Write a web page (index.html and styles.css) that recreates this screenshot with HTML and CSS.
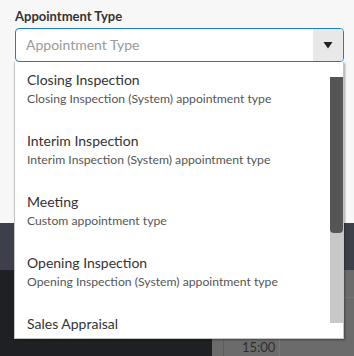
FILE: index.html
```html
<!DOCTYPE html>
<html lang="en">
<head>
  <meta charset="UTF-8">
  <meta name="viewport" content="width=device-width, initial-scale=1.0">
  <title>Appointment Type</title>
  <link rel="stylesheet" href="styles.css">
</head>
<body>

  <div class="app">
    <div class="panel">
      <div class="field">
        <label class="field-label">Appointment Type</label>
        <div class="select">
          <span class="placeholder">Appointment Type</span>
          <span class="arrow">
            <svg width="10" height="7" viewBox="0 0 10 7"><polygon points="0.5,0 9.5,0 5,6.5" fill="#222"/></svg>
          </span>
        </div>

        <div class="menu">
          <ul class="options">
            <li>
              <div class="opt-title">Closing Inspection</div>
              <div class="opt-sub">Closing Inspection (System) appointment type</div>
            </li>
            <li>
              <div class="opt-title">Interim Inspection</div>
              <div class="opt-sub">Interim Inspection (System) appointment type</div>
            </li>
            <li>
              <div class="opt-title">Meeting</div>
              <div class="opt-sub">Custom appointment type</div>
            </li>
            <li>
              <div class="opt-title">Opening Inspection</div>
              <div class="opt-sub">Opening Inspection (System) appointment type</div>
            </li>
            <li>
              <div class="opt-title">Sales Appraisal</div>
            </li>
          </ul>
          <div class="scrollbar">
            <div class="thumb"></div>
          </div>
        </div>
      </div>
    </div>

    <div class="toolbar"></div>

    <div class="lower">
      <div class="sidebar"></div>
      <div class="calendar">
        <div class="gutter"></div>
        <div class="times">
          <div class="slot"></div>
          <div class="time">15:00</div>
        </div>
        <div class="day">
          <div class="slot"></div>
        </div>
      </div>
    </div>
  </div>

</body>
</html>
```

FILE: styles.css
```css
* {
  margin: 0;
  padding: 0;
  box-sizing: border-box;
}

body {
  font-family: 'Lato', 'Open Sans', sans-serif;
  background-color: #1f2024;
  color: #333;
  overflow: hidden;
}

.app {
  width: 354px;
  height: 356px;
  display: flex;
  flex-direction: column;
}

.panel {
  height: 227px;
  background-color: #f7f7f7;
  padding: 7px 10px 0 15px;
}

.field {
  position: relative;
}

.field-label {
  display: block;
  font-size: 13px;
  font-weight: 700;
  line-height: 18px;
  color: #333;
  margin-bottom: 3px;
}

.select {
  display: flex;
  height: 34px;
  background-color: #fff;
  border: 1px solid #1a80c4;
  border-radius: 4px;
  overflow: hidden;
}

.placeholder {
  flex: 1;
  padding-left: 10px;
  font-size: 14px;
  line-height: 32px;
  color: #999;
}

.arrow {
  width: 30px;
  background-color: #e8e8e8;
  display: flex;
  align-items: center;
  justify-content: center;
}

.menu {
  position: absolute;
  top: 55px;
  left: -1px;
  width: 330px;
  height: 277px;
  background-color: #fff;
  border: 1px solid #c4c4c4;
  border-top: none;
  box-shadow: 1px 1px 2px rgba(0, 0, 0, 0.35);
  display: flex;
  z-index: 10;
}

.options {
  flex: 1;
  list-style: none;
  overflow: hidden;
  padding-left: 12px;
}

.options li {
  padding: 8px 0 15px;
  height: 61px;
}

.opt-title {
  font-size: 14px;
  line-height: 20px;
  color: #333;
}

.opt-sub {
  font-size: 12.2px;
  line-height: 18px;
  color: #555;
}

.scrollbar {
  width: 13px;
  margin: 15px 0 15px;
  background-color: #c8c8c8;
}

.thumb {
  height: 156px;
  background-color: #555;
  border-radius: 0 0 4px 4px;
}

.toolbar {
  height: 48px;
  background-color: #3d4049;
}

.lower {
  flex: 1;
  display: flex;
}

.sidebar {
  width: 212px;
  background-color: #1f2024;
}

.calendar {
  flex: 1;
  display: flex;
  background-color: #6b6b6b;
}

.gutter {
  width: 12px;
  border-right: 1px solid #5c5c5c;
}

.times {
  width: 56px;
  border-right: 1px solid #767676;
}

.times .slot {
  height: 68px;
}

.time {
  font-size: 13px;
  line-height: 18px;
  color: #2e2e2e;
  padding-left: 18px;
}

.day {
  flex: 1;
}

.day .slot {
  height: 28px;
  border-bottom: 1px solid #737373;
}
```
